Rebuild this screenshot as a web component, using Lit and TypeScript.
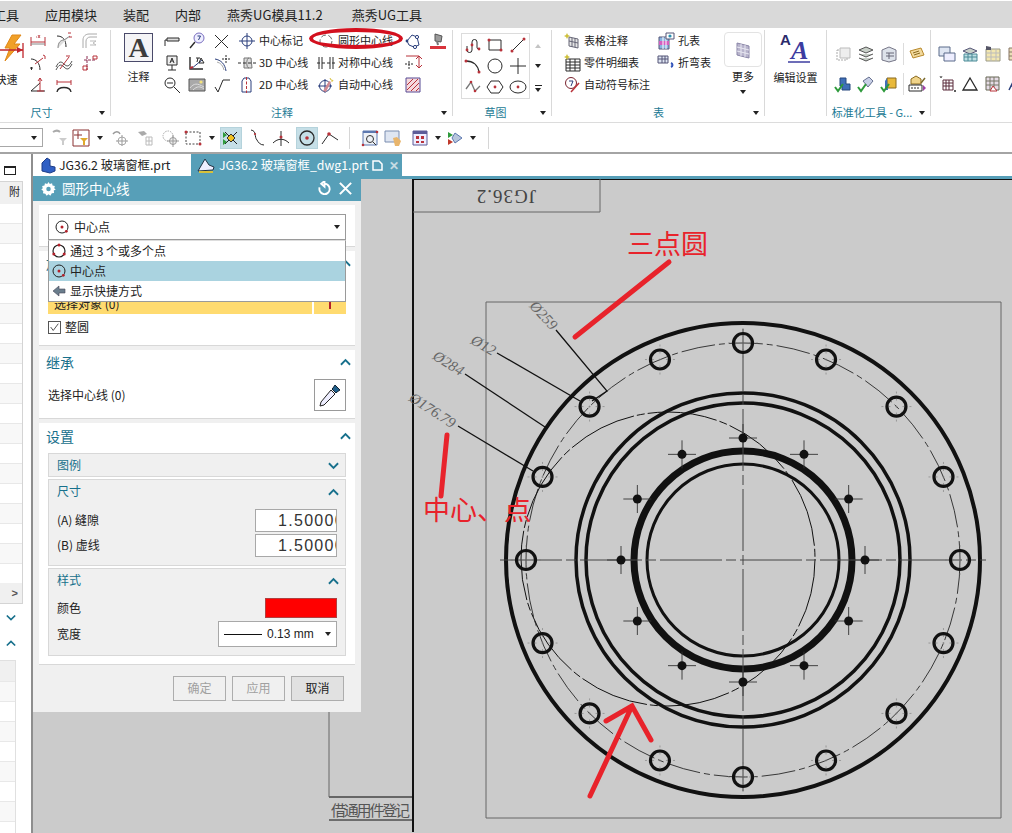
import { LitElement, html, svg, css, TemplateResult } from 'lit';
import { customElement } from 'lit/decorators.js';

const RED = '#b8323a';
const DK = '#2a2a2a';
const NAVY = '#2b3f7c';

// 18x18 ribbon and toolbar icons
const ICONS: Record<string, TemplateResult> = {
  dimH: svg`<path d="M2 5v9M16 5v9M2 10h14" stroke="${RED}" fill="none"/><path d="M7 5h1M9 3l2 3M11 3l-2 3" stroke="${RED}" fill="none" stroke-width=".8"/><path d="M2 12h14" stroke="#888"/>`,
  dimR: svg`<path d="M2 4c6 0 9 4 9 11" stroke="${DK}" fill="none"/><path d="M3 16c0-6 3-8 6-8l6-4" stroke="#888" fill="#ddd"/><path d="M13 1h3M14 5h3" stroke="${RED}"/>`,
  dimGrey: svg`<path d="M2 16V8c0-4 3-6 6-6h8M5 16V9c0-2 2-4 4-4h7" stroke="#aaa" fill="none"/><path d="M9 9h6l-3 2 3 2H9" stroke="#bbb" fill="none"/>`,
  dimR2: svg`<path d="M2 5c5 0 9 4 9 11" stroke="${DK}" fill="none"/><path d="M6 10l8-6" stroke="${RED}"/><path d="M14 1l2 1v3" stroke="${RED}" fill="none"/><path d="M1 14h3M2.5 13v3" stroke="${DK}"/>`,
  dimWave: svg`<path d="M1 13c3-6 5-6 8-3s5 3 8-3M1 16c3-6 5-6 8-3s5 3 8-3" stroke="#555" fill="none"/><path d="M5 15l9-12" stroke="${RED}"/><path d="M11 2h4" stroke="${RED}"/>`,
  dimOrd: svg`<path d="M3 6h12M6 2v14" stroke="#8a2c50" fill="none" stroke-dasharray="3 1"/><path d="M12 2h4v3h-4zM2 12h4v4H2z" stroke="${RED}" fill="none"/>`,
  dimAng: svg`<path d="M2 15L11 7M2 15h14" stroke="${DK}" fill="none"/><path d="M11 2v13M9 5l2-3 2 3M8 15h7" stroke="${RED}" fill="none"/>`,
  dimArc: svg`<path d="M2 4v5M16 4v5M2 6h14" stroke="${RED}" fill="none"/><path d="M2 16c1-6 13-6 14 0" stroke="${DK}" fill="none" stroke-width="1.3"/>`,
  weld: svg`<path d="M2 14V8h4" stroke="${DK}" fill="none"/><path d="M4 6h12v3H4z" stroke="${DK}" fill="#ddd"/>`,
  balloon: svg`<circle cx="11" cy="6" r="5" stroke="#7a6fc0" fill="#eef"/><path d="M9.5 4h3l-2 4" stroke="${NAVY}" fill="none"/><path d="M7 10l-5 6" stroke="${DK}" stroke-width="1.4"/>`,
  cross: svg`<path d="M2 3l13 13M15 3L2 16" stroke="${DK}" fill="none"/>`,
  flag: svg`<path d="M4 2h10v9H4z" stroke="${DK}" fill="#eee"/><path d="M7 9l2-5 2 5M8 7h2M9 11v5M5 16h8" stroke="${DK}" fill="none"/>`,
  datum: svg`<path d="M2 3v12h13" stroke="${DK}" fill="none" stroke-width="1.4"/><path d="M3 15L14 6" stroke="${NAVY}"/><path d="M8 4h4M10 4l-1 4M13 4l3 5h-5z" stroke="${DK}" fill="none"/><path d="M2 14l3-1" stroke="${RED}" stroke-width="2"/>`,
  arcCross: svg`<path d="M2 5c6 1 10 5 11 12" stroke="${NAVY}" fill="none"/><path d="M4 8c4 1 6 4 7 8" stroke="#aaa" fill="none"/><path d="M13 1v9M9 5h8" stroke="${DK}" stroke-dasharray="2 1"/>`,
  search: svg`<circle cx="7" cy="7" r="5" stroke="${DK}" fill="none"/><path d="M4 7h6M11 11l6 6" stroke="${DK}"/>`,
  image: svg`<path d="M1 3h16v12H1z" stroke="#555" fill="#a9a9a9"/><path d="M2 12c4-5 7-5 14-1M5 14c4-4 7-4 11-1" stroke="#ddd" fill="none"/><circle cx="13" cy="6" r="1.6" fill="#f3e27a"/>`,
  rough: svg`<path d="M2 11l3 5 5-12h7" stroke="${DK}" fill="none"/>`,
  centerMark: svg`<circle cx="9" cy="9" r="5" stroke="${NAVY}" fill="none"/><path d="M9 1v16M1 9h16" stroke="${NAVY}"/>`,
  center3d: svg`<path d="M6 4h7l1 10H6z" stroke="#777" fill="#ddd"/><path d="M11 4c-3 0-3 10 0 10" stroke="#777" fill="none"/><path d="M0 9h18" stroke="${DK}" stroke-dasharray="3 2"/>`,
  center2d: svg`<path d="M4 5l2-3h5l2 3v11H4z" stroke="${NAVY}" fill="none"/><path d="M8.5 1v16" stroke="${RED}" stroke-dasharray="3 1.5"/>`,
  centerCircle: svg`<circle cx="9" cy="9" r="6" stroke="#666" fill="none" stroke-dasharray="5 2.5"/>`,
  symCenter: svg`<path d="M2 3v12M5 3v12M13 3v12M16 3v12" stroke="${DK}"/><path d="M0 9h18" stroke="${DK}" stroke-dasharray="3 2"/>`,
  autoCenter: svg`<circle cx="8" cy="10" r="5.5" stroke="${NAVY}" fill="none"/><path d="M1 10h14M8 3v14" stroke="${NAVY}"/><path d="M6 15l6-10 2 1-5 10z" fill="#d28a92"/><path d="M13 2l1 2 2 .5-1.5 1.5" stroke="#d7c13c" fill="none"/>`,
  bolt: svg`<path d="M3 9l5-6 5 2 2 8-5 2-5-2z" stroke="${NAVY}" fill="none"/><circle cx="3" cy="9" r="1.4" fill="${NAVY}"/><circle cx="13" cy="5" r="1.6" fill="#fff" stroke="${NAVY}"/><circle cx="11" cy="15" r="1.6" fill="#fff" stroke="${NAVY}"/>`,
  ptDim: svg`<path d="M1 10h8M5 7v9" stroke="${DK}" stroke-dasharray="2 1"/><path d="M2 2h13M15 2v11M12 5l3-3 3 3M12 11l3 3 3-3" stroke="${RED}" fill="none"/>`,
  hatch: svg`<path d="M2 2h14v14H2z" stroke="#574a94" fill="#f5d9dd"/><path d="M3 9l6-6M3 14l11-11M7 15l8-8M12 15l3-3" stroke="${RED}"/>`,
  paint: svg`<path d="M6 2l7 2-1 6-6-1z" fill="#9b9b9b" stroke="#555"/><path d="M8 9l1 4" stroke="#777" stroke-width="2"/><path d="M1 14h16v3H1z" fill="#d8333b"/>`,
  skSpline: svg`<path d="M3 10v4a2.5 2.5 0 0 0 5 0V6a2.5 2.5 0 0 1 5 0v5a2 2 0 0 0 3 2" stroke="${DK}" fill="none"/><g fill="${RED}"><circle cx="3" cy="14" r="1.4"/><circle cx="8" cy="9" r="1.4"/><circle cx="15" cy="13" r="1.4"/></g>`,
  skRect: svg`<path d="M3 4h12v10H3z" stroke="${DK}" fill="none"/><g fill="${RED}"><circle cx="3" cy="4" r="1.5"/><circle cx="15" cy="14" r="1.5"/></g>`,
  skLine: svg`<path d="M3 15L15 3" stroke="${DK}"/><g fill="${RED}"><circle cx="3" cy="15" r="1.5"/><circle cx="15" cy="3" r="1.5"/></g>`,
  skArc: svg`<path d="M2 4c7 0 12 4 13 11" stroke="${DK}" fill="none" stroke-width="1.3"/><g fill="${RED}"><circle cx="2" cy="4" r="1.5"/><circle cx="15" cy="15" r="1.5"/></g>`,
  skCircle: svg`<circle cx="9" cy="9" r="7" stroke="${DK}" fill="none"/>`,
  skPlus: svg`<path d="M9 1v16M1 9h16" stroke="${DK}"/>`,
  skStudio: svg`<path d="M2 11l5-7 4 9 5-5" stroke="#777" fill="none" stroke-width="1.3"/><g fill="${RED}"><circle cx="7" cy="4" r="1.3"/><circle cx="11" cy="13" r="1.3"/></g>`,
  skHex: svg`<path d="M5 3h8l4 6-4 6H5L1 9z" stroke="${DK}" fill="none"/><circle cx="9" cy="9" r="1.4" fill="${RED}"/>`,
  skEll: svg`<ellipse cx="9" cy="9" rx="8" ry="6" stroke="${DK}" fill="none"/><circle cx="9" cy="9" r="1.4" fill="${RED}"/>`,
  tblNote: svg`<path d="M6 5l9 2v9l-9-2z" stroke="#667" fill="#e6e6e6"/><path d="M6 9l9 2M9 6v9M12 6v9" stroke="#667"/><path d="M4 1l1 2 2 1-2 1-1 2-1-2-2-1 2-1z" fill="#cfc13c"/>`,
  partList: svg`<path d="M3 5h14v12H3z" stroke="${DK}" fill="#fff"/><path d="M3 8h14M3 11h14M3 14h14M7 5v12M12 5v12" stroke="${DK}"/><path d="M4 0l1 2 2 1-2 1-1 2-1-2-2-1 2-1z" fill="#cfc13c"/>`,
  autoBalloon: svg`<circle cx="8" cy="7" r="5.5" stroke="#7a2430" fill="#fff"/><path d="M6 5h4l-2 5" stroke="${NAVY}" fill="none"/><path d="M8 16l8-9" stroke="${RED}" stroke-width="1.5"/>`,
  holeTbl: svg`<path d="M2 5h10v12H2z" fill="#8ab4e0" stroke="#557"/><path d="M2 9h10v4H2z" fill="#d45fc0"/><path d="M6 5v12M9 5v12" stroke="#fff"/><path d="M9 1h8v6H9z" fill="#fff" stroke="#557"/><circle cx="13" cy="4" r="1.6" fill="#2a8fb0"/>`,
  bendTbl: svg`<path d="M1 2h10v7H1z" fill="#dfe6f3" stroke="#557"/><path d="M1 5h10M5 2v7M8 2v7" stroke="#557"/><path d="M14 9c2 1 2 3 0 4" stroke="#3355bb" stroke-width="2" fill="none"/>`,
  moreTbl: svg`<path d="M3 2l12 3v12L3 14z" fill="#b8b4cc" stroke="#8a86a8"/><path d="M3 6l12 3M3 10l12 3M7 3v12M11 4v12" stroke="#e8e8f2"/>`,
  g1: svg`<path d="M3 5h10v10H3z" stroke="#aaa" fill="none" stroke-dasharray="2 1"/><path d="M6 3h10v10H6z" stroke="#bbb" fill="#eee"/>`,
  g2: svg`<path d="M2 5l7-3 7 3-7 3zM2 9l7 3 7-3M2 13l7 3 7-3" stroke="#555" fill="#c8d0c8"/>`,
  g3: svg`<path d="M2 5l7-3 7 3v10l-7 2-7-2z" stroke="#778" fill="#dde2ea"/><path d="M6 8h8M6 11h8M9 8v6" stroke="#667"/>`,
  g4: svg`<path d="M2 6l11-3 3 7-11 3z" stroke="#b8892c" fill="#f2d99c"/><path d="M5 8l6-2M6 10l6-2" stroke="#8a6a20"/>`,
  ok1: svg`<path d="M6 3h6v6h4v6H8v-4H6z" fill="#3f6fb8" stroke="#27497f"/><path d="M1 12l3 4 5-7" stroke="#2e9a3c" fill="none" stroke-width="2"/>`,
  ok2: svg`<path d="M6 6l6-4 4 4-5 6z" fill="#c8cfe6" stroke="#66708f"/><path d="M1 12l3 4 5-7" stroke="#2e9a3c" fill="none" stroke-width="2"/>`,
  ok3: svg`<path d="M7 3h9v10H7z" fill="#e9b93a" stroke="#8a6a20"/><path d="M7 3l-2 3v9h3" fill="#3f6fb8"/><path d="M1 12l3 4 5-7" stroke="#2e9a3c" fill="none" stroke-width="2"/>`,
  g8: svg`<path d="M3 4l5-3 5 3v5H3z" fill="#f0d48a" stroke="#8a6a20"/><path d="M1 10h13v6H1z" fill="#fff" stroke="${DK}"/><path d="M3 13h9" stroke="${DK}" stroke-dasharray="2 1"/><path d="M15 10l3 3-3 3z" fill="#a040a8"/><path d="M13 8l4-5" stroke="#7a6a2c" stroke-width="1.5"/>`,
  h1: svg`<path d="M1 2h11v9H1z" fill="#dfe6f3" stroke="#5a6a8a"/><path d="M6 8h11v8H6z" fill="#eef" stroke="#5a6a8a"/>`,
  h2: svg`<path d="M2 6l7-3 7 3-7 3z" stroke="#557" fill="#c8d0c8"/><path d="M3 9h13v7H3z" fill="#bfe0e4" stroke="#4a8a96"/><path d="M7 9v7M11 9v7M3 12h13" stroke="#4a8a96"/>`,
  h3: svg`<path d="M2 4h14v12H2z" fill="#f3e7b0" stroke="#998"/><path d="M2 8h14M2 12h14M7 4v12M12 4v12" stroke="#bbb"/><path d="M2 1l5 1v3H2z" fill="#556"/>`,
  h4: svg`<path d="M2 3h12v12H2z" fill="#eadfb8" stroke="#876"/><path d="M2 7h12M2 11h12M7 3v12" stroke="#876"/><path d="M10 14l6-6" stroke="#a5352c" stroke-width="1.5"/>`,
  h5: svg`<path d="M5 5h10v10H5z" fill="#fff" stroke="#5a2a3a"/><path d="M5 8h10M5 11h10M8 5v10M11 5v10" stroke="#5a2a3a"/><path d="M2 1l1 2 1-2M16 15l2 2M18 15l-2 2" stroke="#333" fill="none" stroke-width=".8"/>`,
  h6: svg`<path d="M9 3l7 12H2z" stroke="${DK}" fill="none" stroke-width="1.3"/>`,
  h7: svg`<path d="M2 2h13v13H2z" fill="#e6dce6" stroke="#665"/><path d="M2 6h13M2 10h13M6 2v13M10 2v13" stroke="#776"/><path d="M9 11l4 5H6z" fill="#fff" stroke="${RED}"/>`,
  h8: svg`<path d="M2 15L8 3l4 12M4 11h7" stroke="${NAVY}" fill="none" stroke-width="1.5"/>`,
  filter: svg`<path d="M2 3c3-2 5-2 7 0" stroke="#aaa" fill="none" stroke-width="2"/><path d="M8 9h8l-3 3v4h-2v-4z" fill="#ccc"/>`,
  selFilter: svg`<path d="M1 1h16v16H1z" stroke="#8a3030" fill="#fff"/><path d="M6 2v8M2 6h8" stroke="#8a3030"/><path d="M8 9h8l-3 3v4h-2v-4z" fill="#e0a92c"/>`,
  undoSnap: svg`<path d="M2 5c2-3 6-3 7 0" stroke="#999" fill="none" stroke-width="1.4"/><circle cx="11" cy="12" r="4" stroke="#aaa" fill="none"/><path d="M5 12h12M11 6v11" stroke="#999"/>`,
  greyTbl: svg`<path d="M2 3l6-1 3 3-5 2z" fill="#aaa"/><path d="M10 8h6v8h-6z" stroke="#bbb" fill="none"/><path d="M10 12h6M13 8v8" stroke="#bbb"/>`,
  dotSnap: svg`<circle cx="7" cy="7" r="5" stroke="#aaa" fill="none" stroke-dasharray="1.5 1"/><circle cx="12" cy="12" r="3.5" stroke="#999" fill="#eee"/><path d="M6 12h12M12 6v12" stroke="#999"/>`,
  selBox: svg`<path d="M2 3h14v12H2z" stroke="#444" fill="none" stroke-dasharray="2 1.5"/><g fill="${RED}"><circle cx="2" cy="3" r="1.5"/><circle cx="16" cy="15" r="1.5"/></g>`,
  snapCross: svg`<path d="M3 3l4 4M15 3l-4 4M3 15l4-4M15 15l-4-4" stroke="#222"/><path d="M9 5l4 4-4 4-4-4z" fill="#f0c020" stroke="#333"/><path d="M1 3l4 3-4 3zM1 10l4 3-4 3z" fill="#2e9a3c"/>`,
  curveEnd: svg`<path d="M3 1c6 1 3 7 6 10 1 2 3 5 7 5" stroke="${DK}" fill="none"/><circle cx="7" cy="5" r="1.1" fill="${RED}"/>`,
  perp: svg`<path d="M1 14c5-5 11-5 16 0M9 2v15" stroke="${DK}" fill="none"/><circle cx="9" cy="8" r="1.5" fill="${RED}"/>`,
  arcCenter: svg`<circle cx="9" cy="9" r="7" stroke="${DK}" fill="none" stroke-width="1.3"/><circle cx="9" cy="9" r="1.8" fill="${RED}"/>`,
  arcEnd: svg`<path d="M1 15L8 5l9 6" stroke="${DK}" fill="none"/><circle cx="8" cy="5" r="1.8" fill="${RED}"/>`,
  zoomBox: svg`<path d="M2 2h14v14H2z" stroke="#5c78b0" fill="#eef2f8"/><path d="M2 2h14v2H2z" fill="#5c78b0"/><circle cx="9" cy="10" r="3.5" stroke="#333" fill="none"/><path d="M12 13l3 3" stroke="#333"/><g fill="${RED}"><circle cx="2" cy="16" r="1.3"/><circle cx="16" cy="3" r="1.3"/></g>`,
  handBox: svg`<path d="M1 2h14v11H1z" stroke="#7a8db0" fill="#dfe6f2"/><path d="M9 9l4-1 4 4-2 5h-4z" fill="#e8b56c"/>`,
  gridBox: svg`<path d="M2 2h14v14H2z" stroke="#5c5c98" fill="#eef"/><path d="M2 2h14v3H2z" fill="#5c5c98"/><path d="M5 7h3v3H5zM10 7h3v3h-3zM5 12h3v2H5zM10 12h3v2h-3z" fill="${RED}"/>`,
  arrowMix: svg`<path d="M8 4l7 5-7 5-3-5z" fill="#b8c6dc" stroke="#5c78b0"/><path d="M1 3l5 3-5 3z" fill="#2e9a3c"/><path d="M1 10l5 3-5 3z" fill="#c0392b"/>`,
};

type Item = { icon?: string; label?: string; mark?: boolean };

const ANNOT_COLS: Item[][] = [
  [{ icon: 'weld' }, { icon: 'flag' }, { icon: 'search' }],
  [{ icon: 'balloon' }, { icon: 'datum' }, { icon: 'image' }],
  [{ icon: 'cross' }, { icon: 'arcCross' }, { icon: 'rough' }],
  [{ icon: 'centerMark', label: '中心标记' }, { icon: 'center3d', label: '3D 中心线' }, { icon: 'center2d', label: '2D 中心线' }],
  [{ icon: 'centerCircle', label: '圆形中心线', mark: true }, { icon: 'symCenter', label: '对称中心线' }, { icon: 'autoCenter', label: '自动中心线' }],
  [{ icon: 'bolt' }, { icon: 'ptDim' }, { icon: 'hatch' }],
  [{ icon: 'paint' }],
];

const TOOL_ITEMS: { w: number; icon?: string; kind?: string; on?: boolean }[] = [
  { w: 22, icon: 'filter' }, { w: 20, icon: 'selFilter' }, { w: 18, kind: 'arrow' },
  { w: 22, icon: 'undoSnap' }, { w: 28, icon: 'greyTbl' }, { w: 22, icon: 'dotSnap' },
  { w: 24, icon: 'selBox' }, { w: 14, kind: 'arrow' }, { w: 24, icon: 'snapCross', on: true },
  { w: 28, icon: 'curveEnd' }, { w: 20, icon: 'perp' }, { w: 32, icon: 'arcCenter', on: true },
  { w: 14, icon: 'arcEnd' }, { w: 24, kind: 'sep' }, { w: 18, icon: 'zoomBox' },
  { w: 28, icon: 'handBox' }, { w: 26, icon: 'gridBox' }, { w: 10, kind: 'arrow' },
  { w: 26, icon: 'arrowMix' }, { w: 8, kind: 'arrow' }, { w: 22, kind: 'sep' },
];

const CX = 743;
const CY = 561;
const polar = (r: number, deg: number) => [
  CX + r * Math.cos((deg * Math.PI) / 180),
  CY + r * Math.sin((deg * Math.PI) / 180),
];
const BIG_HOLES = Array.from({ length: 16 }, (_, i) => polar(217, i * 22.5));
const SMALL_HOLES = Array.from({ length: 12 }, (_, i) => polar(122, i * 30));

const icon = (name: string) => html`<svg class="ic" viewBox="0 0 18 18">${ICONS[name]}</svg>`;
const caret = html`<span class="caret"></span>`;
const chevUp = html`<svg class="chev" viewBox="0 0 12 8"><path d="M1 7l5-5 5 5" /></svg>`;
const chevDown = html`<svg class="chev" viewBox="0 0 12 8"><path d="M1 1l5 5 5-5" /></svg>`;
const modeThree = html`<svg class="mode" viewBox="0 0 16 16">
  <circle cx="8" cy="8" r="6" fill="none" stroke="#222" stroke-width="1.2" />
  <g fill="#b3202a"><circle cx="8" cy="2" r="1.5" /><circle cx="2.8" cy="11" r="1.5" /><circle cx="13.2" cy="11" r="1.5" /></g>
</svg>`;
const modeCenter = html`<svg class="mode" viewBox="0 0 16 16">
  <circle cx="8" cy="8" r="6" fill="none" stroke="#222" />
  <circle cx="8" cy="8" r="1.5" fill="#b3202a" /><circle cx="12.3" cy="12.3" r="1.4" fill="#b3202a" />
</svg>`;

@customElement('app-root')
export class AppRoot extends LitElement {
  static override styles = css`
    :host {
      display: block;
      width: 1012px;
      height: 833px;
      overflow: hidden;
      background: #fff;
      color: #222;
      font: 11px/1.2 "Noto Sans CJK SC", "Liberation Sans", sans-serif;
    }
    .ic { width: 18px; height: 18px; flex: none; overflow: visible; stroke-width: 1; }
    .caret {
      display: inline-block;
      flex: none;
      width: 0;
      height: 0;
      border: 3.5px solid transparent;
      border-top: 4px solid #222;
      border-bottom: 0;
    }

    .menu {
      height: 27px;
      margin-top: 1px;
      background: #d9d9d9;
      display: flex;
      align-items: center;
      gap: 26px;
      font-size: 13px;
      white-space: nowrap;
    }
    .menu span:first-child { margin-left: -7px; }
    .menu span:last-child { margin-left: 3px; }

    .ribbon {
      height: 94px;
      display: flex;
      border-bottom: 1px solid #dcdcdc;
      box-sizing: content-box;
      overflow: hidden;
    }
    .group {
      flex: none;
      display: flex;
      flex-direction: column;
      position: relative;
      padding-top: 2px;
      box-sizing: border-box;
    }
    .group.sep::after {
      content: "";
      position: absolute;
      right: 0;
      top: 2px;
      bottom: 6px;
      width: 1px;
      background: #d9d9d9;
    }
    .gbody { height: 75px; display: flex; }
    .gbody.tbl { padding-left: 9px; }
    .glabel {
      flex: 1;
      position: relative;
      text-align: center;
      color: #1c7a94;
      font-size: 11px;
      line-height: 13px;
      padding-top: 1px;
      white-space: nowrap;
    }
    .glabel .caret { position: absolute; top: 6px; right: 6px; }
    .col { display: flex; flex-direction: column; flex: none; }
    .cell { height: 22px; display: flex; align-items: center; gap: 1px; position: relative; white-space: nowrap; }
    .cell .slot { width: 22px; display: flex; justify-content: center; flex: none; }
    .oval {
      position: absolute;
      left: -6px;
      top: -2px;
      width: 94px;
      height: 21px;
      border: 4px solid #d3101e;
      border-radius: 50%;
      box-sizing: border-box;
    }
    .big {
      flex: none;
      display: flex;
      flex-direction: column;
      align-items: center;
      line-height: 14px;
    }
    .quick { width: 27px; overflow: hidden; padding-top: 3px; }
    .quick svg { width: 28px; height: 32px; flex: none; margin-left: -1px; }
    .quick span { margin-top: 7px; white-space: nowrap; margin-left: -14px; }
    .note { width: 29px; margin: 3px 8px 0 13px; }
    .note b {
      width: 29px;
      height: 29px;
      box-sizing: border-box;
      border: 1px solid #4a4a6a;
      background: #f4f4f6;
      font: 700 28px/27px "Liberation Serif", serif;
      text-align: center;
      color: #3c3c3c;
    }
    .note span { margin-top: 7px; white-space: nowrap; }
    .gallery {
      margin: 3px 0 0 8px;
      width: 69px;
      height: 66px;
      box-sizing: border-box;
      border: 1px solid #dcdcdc;
      display: grid;
      grid-template-columns: repeat(3, 22.3px);
      grid-auto-rows: 21.3px;
      place-items: center;
    }
    .scroll {
      width: 14px;
      margin: 3px 0 0 1px;
      display: flex;
      flex-direction: column;
      align-items: center;
    }
    .scroll i { height: 22px; display: flex; align-items: center; flex-direction: column; justify-content: center; gap: 2px; }
    .scroll i.off .caret { border-top-color: transparent; border-bottom: 4px solid #c4c4c4; }
    .scroll u { width: 7px; height: 1px; background: #222; }
    .more { margin: 2px 0 0 10px; width: 38px; }
    .more b {
      display: flex;
      align-items: center;
      justify-content: center;
      width: 38px;
      height: 35px;
      box-sizing: border-box;
      border: 1px solid #e3e3e3;
      border-radius: 4px;
    }
    .more span:not(.caret) { margin: 2px 0 7px; }
    .edit { width: 61px; padding-top: 2px; }
    .edit svg { width: 44px; height: 32px; flex: none; overflow: visible; }
    .edit span { margin-top: 6px; white-space: nowrap; }
    .tools { display: grid; grid-auto-rows: 30px; padding-top: 9px; place-items: center; }
    .tools.std { margin-left: 4px; grid-template-columns: 23px 23px 23px 6px 22px; }
    .tools.last { margin-left: 4px; grid-template-columns: repeat(4, 23px); }
    .vbar { width: 1px; height: 22px; background: #dcdcdc; }

    .toolbar {
      height: 31px;
      display: flex;
      align-items: center;
      border-bottom: 2px solid #a4a4a4;
      box-sizing: border-box;
    }
    .combo {
      width: 43px;
      height: 19px;
      margin-right: 6px;
      box-sizing: border-box;
      border: 1px solid #a8a8a8;
      border-left: 0;
      display: flex;
      align-items: center;
      justify-content: flex-end;
      padding-right: 5px;
    }
    .tool { flex: none; display: flex; justify-content: center; align-items: center; height: 24px; }
    .tool.on span {
      width: 22px;
      height: 22px;
      display: flex;
      justify-content: center;
      align-items: center;
      background: #c6dfe7;
      border: 1px solid #b5d3dc;
      box-sizing: border-box;
    }
    .tool.sep::after { content: ""; width: 1px; height: 22px; background: #d6d6d6; }

    .main { display: flex; height: 679px; }
    .side {
      width: 33px;
      flex: none;
      box-sizing: border-box;
      border-right: 2px solid #8e8e8e;
      display: flex;
      flex-direction: column;
      overflow: hidden;
    }
    .side .win { margin: 12px 0 0 4px; width: 12px; height: 9px; box-sizing: border-box; border: 1px solid #222; border-top-width: 2px; flex: none; }
    .list { margin-top: 6px; width: 23px; height: 423px; box-sizing: border-box; border: 1px solid #d4d4d4; border-left: 0; display: flex; flex-direction: column; flex: none; }
    .list .head { height: 22px; background: #f0f0f0; font-size: 11px; text-align: right; padding: 3px 2px 0 0; box-sizing: border-box; flex: none; }
    .row { height: 20px; flex: none; border-bottom: 1px solid #e8e8e8; box-sizing: border-box; }
    .row:nth-child(even) { background: #f8f8f8; }
    .rows { flex: 1; overflow: hidden; }
    .list .bar { height: 20px; background: #f0f0f0; display: flex; justify-content: flex-end; align-items: center; padding-right: 4px; font: 700 11px "Liberation Sans", sans-serif; color: #555; }
    .side .chev { margin: 10px 0 0 6px; width: 10px; height: 8px; }
    .side .chev + .chev { margin-top: 17px; }
    .sub { margin-top: 13px; width: 15px; flex: 1; border: 1px solid #e0e0e0; border-left: 0; border-bottom: 0; }
    .sub .row:first-child { height: 21px; background: #f0f0f0; }
    .chev { fill: none; stroke: #17708c; stroke-width: 2; width: 11px; height: 8px; flex: none; }

    .work { flex: 1; position: relative; display: flex; flex-direction: column; min-width: 0; }
    .tabs { height: 22px; display: flex; flex: none; font-size: 12.3px; white-space: nowrap; }
    .tab { display: flex; align-items: center; gap: 2px; padding-left: 6px; box-sizing: border-box; }
    .tab.a { width: 158px; }
    .tab.b { width: 211px; background: #579fb8; color: #fff; gap: 4px; }
    .tab.b em { font-style: normal; font-weight: 700; color: #c6dbe3; margin-left: 2px; }
    .strip { height: 3px; background: #579fb8; flex: none; }
    .canvas { flex: 1; background: #cbcbcb; min-height: 0; }
    .canvas svg { display: block; width: 979px; height: 654px; }

    .dialog {
      position: absolute;
      left: 0;
      top: 22px;
      width: 328px;
      height: 536px;
      background: #f0f0f0;
      font-size: 12px;
    }
    .dtitle {
      height: 25px;
      background: #579fb8;
      color: #fff;
      display: flex;
      align-items: center;
      padding: 0 8px;
      font-size: 13.5px;
      gap: 6px;
    }
    .dtitle span { flex: 1; }
    .dtitle svg { width: 15px; height: 15px; flex: none; }
    .dbody { padding: 4px 6px 0; display: flex; flex-direction: column; gap: 4px; }
    .sect { background: #fff; border-bottom: 1px solid #d8d8d8; box-sizing: border-box; padding: 0 9px; position: relative; }
    .s1 { height: 42px; padding-top: 9px; }
    .s2 { height: 95px; }
    .s3 { height: 69px; }
    .s4 { height: 242px; }
    .stitle {
      margin: 0 -5px 0 -2px;
      display: flex;
      justify-content: space-between;
      align-items: center;
      color: #17708c;
      font-size: 14px;
      height: 24px;
    }
    .select {
      height: 26px;
      box-sizing: border-box;
      border: 1px solid #9a9a9a;
      display: flex;
      align-items: center;
      justify-content: space-between;
      padding: 0 5px;
    }
    .select div { display: flex; align-items: center; gap: 4px; }
    .mode { width: 16px; height: 16px; flex: none; }
    .pop {
      position: absolute;
      left: 15px;
      top: 64px;
      width: 298px;
      height: 62px;
      box-sizing: border-box;
      background: #fff;
      border: 1px solid #9a9a9a;
      border-top-color: #ddd;
      z-index: 2;
    }
    .pop div { height: 20px; display: flex; align-items: center; gap: 3px; padding-left: 2px; }
    .pop .cur { background: #aad3e0; }
    .yellow { display: flex; gap: 2px; height: 20px; margin-top: 19px; }
    .yellow div { background: #ffdb70; }
    .yellow div:first-child { flex: 1; padding-left: 6px; line-height: 20px; }
    .yellow div:last-child { width: 32px; display: flex; justify-content: center; align-items: center; }
    .check { display: flex; align-items: center; gap: 4px; margin-top: 6px; }
    .box {
      width: 13px;
      height: 13px;
      box-sizing: border-box;
      border: 1px solid #555;
      display: flex;
    }
    .pick { display: flex; justify-content: space-between; align-items: center; margin-top: 5px; }
    .dropper { width: 32px; height: 32px; box-sizing: border-box; border: 1px solid #9a9a9a; display: flex; }
    .s4 .stitle { height: 26px; margin-bottom: 4px; }
    .panel {
      background: #f0f0f0;
      border: 1px solid #d8d8d8;
      box-sizing: border-box;
      padding: 0 8px;
      margin-bottom: 2px;
    }
    .ph { height: 23px; display: flex; justify-content: space-between; align-items: center; color: #17708c; font-size: 12px; margin-right: -2px; }
    .p1 { height: 24px; }
    .p2 { height: 87px; }
    .p3 { height: 88px; }
    .frow { display: flex; justify-content: space-between; align-items: center; }
    .p2 .frow { height: 23px; margin-bottom: 2px; }
    .p2 .ph { margin-bottom: 6px; }
    .value {
      width: 82px;
      height: 23px;
      box-sizing: border-box;
      border: 1px solid #a8a8a8;
      background: #fff;
      overflow: hidden;
      white-space: nowrap;
      font: 16px/21px "Liberation Sans", sans-serif;
      padding-left: 22px;
      letter-spacing: 1.3px;
      color: #333;
    }
    .p3 .ph { margin-bottom: 6px; }
    .swatch { width: 72px; height: 20px; background: #ff0000; border: 1px solid #b04040; box-sizing: border-box; }
    .width {
      margin-top: 3px;
      height: 26px;
    }
    .wsel {
      width: 119px;
      height: 26px;
      box-sizing: border-box;
      border: 1px solid #a8a8a8;
      background: #fff;
      display: flex;
      align-items: center;
      gap: 5px;
      padding: 0 5px;
      font: 12px "Liberation Sans", sans-serif;
    }
    .wsel hr { width: 38px; border: 0; border-top: 1px solid #111; margin: 0; flex: none; }
    .wsel span:not(.caret) { flex: 1; white-space: nowrap; }
    .dfoot { display: flex; justify-content: flex-end; gap: 6px; padding: 11px 17px 0 0; }
    .btn {
      width: 53px;
      height: 25px;
      box-sizing: border-box;
      border: 1px solid #adadad;
      display: flex;
      align-items: center;
      justify-content: center;
      color: #a0a0a0;
    }
    .btn.go { background: #e1e1e1; color: #222; }
  `;

  private renderCol(items: Item[], width: number) {
    return html`<div class="col" style="width:${width}px">
      ${items.map(
        (it) => html`<div class="cell">
          <span class="slot">${it.icon ? icon(it.icon) : ''}</span>
          ${it.label ? html`<span>${it.label}</span>` : ''}
          ${it.mark ? html`<span class="oval"></span>` : ''}
        </div>`,
      )}
    </div>`;
  }

  private renderRibbon() {
    const annotWidths = [25, 25, 25, 79, 87, 25, 22];
    const sketch = ['skSpline', 'skRect', 'skLine', 'skArc', 'skCircle', 'skPlus', 'skStudio', 'skHex', 'skEll'];
    const std = ['g1', 'g2', 'g3', '|', 'g4', 'ok1', 'ok2', 'ok3', '|', 'g8'];
    const last = ['h1', 'h2', 'h3', 'h4', 'h5', 'h6', 'h7', 'h8'];
    return html`<div class="ribbon">
      <div class="group sep" style="width:111px">
        <div class="gbody">
          <div class="big quick">
            <svg viewBox="0 0 28 32">
              <path d="M13 2h9l-7 9h6L6 28l5-13H6z" fill="#f0a028" stroke="#e08818" />
              <path d="M0 17h24M24 10v15" stroke="#c0272d" stroke-width="1.3" fill="none" />
              <path d="M24 17l-6-3v6z" fill="#c0272d" />
            </svg>
            <span>快速</span>
          </div>
          ${this.renderCol([{ icon: 'dimH' }, { icon: 'dimR2' }, { icon: 'dimAng' }], 26)}
          ${this.renderCol([{ icon: 'dimR' }, { icon: 'dimWave' }, { icon: 'dimArc' }], 26)}
          ${this.renderCol([{ icon: 'dimGrey' }, { icon: 'dimOrd' }], 26)}
        </div>
        <div class="glabel"><span style="margin-right:28px">尺寸</span>${caret}</div>
      </div>

      <div class="group sep" style="width:342px">
        <div class="gbody">
          <div class="big note"><b>A</b><span>注释</span></div>
          ${ANNOT_COLS.map((c, i) => this.renderCol(c, annotWidths[i]))}
        </div>
        <div class="glabel">注释${caret}</div>
      </div>

      <div class="group sep" style="width:99px">
        <div class="gbody">
          <div class="gallery">${sketch.map((n) => icon(n))}</div>
          <div class="scroll">
            <i class="off">${caret}</i><i>${caret}</i><i><u></u>${caret}</i>
          </div>
        </div>
        <div class="glabel"><span style="margin-right:14px">草图</span>${caret}</div>
      </div>

      <div class="group sep" style="width:213px">
        <div class="gbody tbl">
          ${this.renderCol(
            [
              { icon: 'tblNote', label: '表格注释' },
              { icon: 'partList', label: '零件明细表' },
              { icon: 'autoBalloon', label: '自动符号标注' },
            ],
            94,
          )}
          ${this.renderCol([{ icon: 'holeTbl', label: '孔表' }, { icon: 'bendTbl', label: '折弯表' }], 59)}
          <div class="big more"><b>${icon('moreTbl')}</b><span>更多</span>${caret}</div>
        </div>
        <div class="glabel">表${caret}</div>
      </div>

      <div class="group sep" style="width:62px">
        <div class="gbody">
          <div class="big edit">
            <svg viewBox="0 0 44 32">
              <text x="6" y="13" font-family="Liberation Sans" font-weight="700" font-size="15" fill="#2b2b6b">A</text>
              <text x="17" y="27" font-family="Liberation Serif" font-weight="700" font-style="italic" font-size="26" fill="#3c3ca0">A</text>
              <path d="M14 30h22" stroke="#3c3ca0" stroke-width="1.5" />
            </svg>
            <span>编辑设置</span>
          </div>
        </div>
      </div>

      <div class="group sep" style="width:104px">
        <div class="gbody">
          <div class="tools std">
            ${std.map((n) => (n === '|' ? html`<span class="vbar"></span>` : icon(n)))}
          </div>
        </div>
        <div class="glabel"><span style="margin-right:14px">标准化工具 - G...</span>${caret}</div>
      </div>

      <div class="group" style="width:82px">
        <div class="gbody">
          <div class="tools last">${last.map((n) => icon(n))}</div>
        </div>
      </div>
    </div>`;
  }

  private renderToolbar() {
    return html`<div class="toolbar">
      <div class="combo">${caret}</div>
      ${TOOL_ITEMS.map((t) => {
        const cls = `tool ${t.on ? 'on' : ''} ${t.kind === 'sep' ? 'sep' : ''}`;
        const inner = t.kind === 'arrow' ? caret : t.icon ? icon(t.icon) : '';
        return html`<div class="${cls}" style="width:${t.w}px">${t.on ? html`<span>${inner}</span>` : inner}</div>`;
      })}
    </div>`;
  }

  private renderSide() {
    return html`<div class="side">
      <div class="win"></div>
      <div class="list">
        <div class="head">附</div>
        <div class="rows">${Array.from({ length: 19 }, () => html`<div class="row"></div>`)}</div>
        <div class="bar">&gt;</div>
      </div>
      ${chevDown}${chevUp}
      <div class="sub">${Array.from({ length: 9 }, () => html`<div class="row"></div>`)}</div>
    </div>`;
  }

  private renderDrawing() {
    const red = '#e8232b';
    return html`<svg viewBox="33 180 979 654">
      <path d="M413 180V833M413 180H1012" stroke="#111" stroke-width="2" fill="none" />
      <path d="M413 213H600V180M486 303H1001V819H486Z" stroke="#666" fill="none" />
      <text transform="rotate(180 506 197)" x="506" y="203" text-anchor="middle" font-family="Liberation Serif" font-size="19" fill="#444" letter-spacing="1">JG36.2</text>
      <path d="M329 713V798" stroke="#666" fill="none" />
      <path d="M329 798H412" stroke="#666" stroke-width="2" fill="none" />
      <path d="M329 821H412" stroke="#111" fill="none" />
      <text x="331" y="817" font-family="Liberation Serif, Noto Sans CJK SC, serif" font-size="15" fill="#555" textLength="79">借通用件登记</text>

      <g fill="none" stroke="#111">
        <circle cx="${CX}" cy="${CY}" r="237" stroke-width="4" />
        <circle cx="${CX}" cy="${CY}" r="167" stroke-width="3.5" />
        <circle cx="${CX}" cy="${CY}" r="157" stroke-width="3.5" />
        <circle cx="${CX}" cy="${CY}" r="109" stroke-width="7" />
        <circle cx="${CX}" cy="${CY}" r="96" stroke-width="3" />
        <circle cx="${CX}" cy="${CY}" r="217" stroke-width=".8" stroke-dasharray="34 4 6 4" />
        <circle cx="668" cy="560" r="147" stroke-width="1" stroke-dasharray="70 3 8 3" />
        <path d="M${CX} 330V792M500 ${CY}H986" stroke="#444" stroke-width="1" stroke-dasharray="62 4 10 4" />
      </g>
      ${BIG_HOLES.map(
        ([x, y]) => svg`
          <path d="M${x - 15} ${y}H${x + 15}M${x} ${y - 15}V${y + 15}" stroke="#777" stroke-width=".6" stroke-dasharray="2 5" />
          <circle cx="${x}" cy="${y}" r="9.5" fill="none" stroke="#111" stroke-width="3.2" />`,
      )}
      ${SMALL_HOLES.map(
        ([x, y]) => svg`
          <path d="M${x - 14} ${y}H${x + 14}M${x} ${y - 14}V${y + 14}" stroke="#333" stroke-width=".9" />
          <circle cx="${x}" cy="${y}" r="4.5" fill="#111" />`,
      )}

      <g stroke="#111" stroke-width="1.3" fill="none">
        <path d="M556 331L607 392L592 402" />
        <path d="M497 354L580 402" />
        <path d="M465 375L545 428" />
        <path d="M458 427L533 472" />
      </g>
      <g font-family="Liberation Serif, serif" font-size="15" font-style="italic" fill="#666" text-anchor="middle">
        <text transform="rotate(47 543 317)" x="543" y="321">Ø259</text>
        <text transform="rotate(30 483 347)" x="483" y="351">Ø12</text>
        <text transform="rotate(32 448 365)" x="448" y="369">Ø284</text>
        <text transform="rotate(33 432 412)" x="432" y="416">Ø176.79</text>
      </g>

      <g fill="${red}" font-family="Noto Sans CJK SC, sans-serif" font-size="27">
        <text x="627" y="255">三点圆</text>
        <text x="423" y="521">中心、点</text>
      </g>
      <g stroke="${red}" stroke-width="5" stroke-linecap="round" fill="none">
        <path d="M575 338L669 263" />
        <path d="M447 436L441 497" />
        <path d="M590 797L632 707M606 722L632 707L651 741" />
      </g>
    </svg>`;
  }

  private renderDialog() {
    return html`<div class="dialog">
      <div class="dtitle">
        <svg viewBox="0 0 16 16">
          <path d="M8 1l1.4 2.1 2.4-.7.5 2.5 2.5.5-.7 2.4L15.7 9l-2.1 1.2.4 2.5-2.5.4L10 15.6l-2-1.5-2 1.5-1.4-2.1-2.5-.4.4-2.5L.3 9l1.6-1.2-.7-2.4 2.5-.5.5-2.5 2.4.7z" fill="#fff" />
          <circle cx="8" cy="8.4" r="2.4" fill="#579fb8" />
        </svg>
        <span>圆形中心线</span>
        <svg viewBox="0 0 16 16"><path d="M8 3a5.5 5.5 0 1 1-5.2 3.8M8 0v6l-3.5-3z" fill="none" stroke="#fff" stroke-width="2" /></svg>
        <svg viewBox="0 0 16 16"><path d="M2 2l12 12M14 2L2 14" stroke="#fff" stroke-width="2.2" /></svg>
      </div>
      <div class="dbody">
        <div class="sect s1">
          <div class="select"><div>${modeCenter}<span>中心点</span></div>${caret}</div>
        </div>
        <div class="sect s2">
          <div class="stitle"><span>放置</span>${chevUp}</div>
          <div class="yellow">
            <div>选择对象 (0)</div>
            <div><svg width="10" height="12" viewBox="0 0 10 12"><path d="M1 2h8M5 2v9" stroke="#b3202a" stroke-width="2" /></svg></div>
          </div>
          <div class="check">
            <span class="box"><svg viewBox="0 0 13 13"><path d="M2 6l3 4 6-8" fill="none" stroke="#333" /></svg></span>
            <span>整圆</span>
          </div>
        </div>
        <div class="sect s3">
          <div class="stitle"><span>继承</span>${chevUp}</div>
          <div class="pick">
            <span>选择中心线 (0)</span>
            <span class="dropper">
              <svg viewBox="0 0 30 30">
                <path d="M20 5l5 5-3 2-1 1-4-4 1-1z" fill="#1f5f8a" stroke="#123" />
                <path d="M16 10l4 4-11 11-4 1 1-4z" fill="#eef" stroke="#222" />
              </svg>
            </span>
          </div>
        </div>
        <div class="sect s4">
          <div class="stitle"><span>设置</span>${chevUp}</div>
          <div class="panel p1"><div class="ph"><span>图例</span>${chevDown}</div></div>
          <div class="panel p2">
            <div class="ph"><span>尺寸</span>${chevUp}</div>
            <div class="frow"><span>(A) 缝隙</span><span class="value">1.50000</span></div>
            <div class="frow"><span>(B) 虚线</span><span class="value">1.50000</span></div>
          </div>
          <div class="panel p3">
            <div class="ph"><span>样式</span>${chevUp}</div>
            <div class="frow"><span>颜色</span><span class="swatch"></span></div>
            <div class="frow width">
              <span>宽度</span>
              <div class="wsel"><hr /><span>0.13 mm</span>${caret}</div>
            </div>
          </div>
        </div>
      </div>
      <div class="dfoot">
        <div class="btn">确定</div>
        <div class="btn">应用</div>
        <div class="btn go">取消</div>
      </div>
      <div class="pop">
        <div>${modeThree}<span>通过 3 个或多个点</span></div>
        <div class="cur">${modeCenter}<span>中心点</span></div>
        <div>
          <svg class="mode" viewBox="0 0 16 16"><path d="M2 8l6-5v3h6v4H8v3z" fill="#6a7d8c" stroke="#445" stroke-width=".6" /></svg>
          <span>显示快捷方式</span>
        </div>
      </div>
    </div>`;
  }

  protected override render() {
    return html`
      <div class="menu">
        <span>工具</span><span>应用模块</span><span>装配</span><span>内部</span>
        <span>燕秀UG模具11.2</span><span>燕秀UG工具</span>
      </div>
      ${this.renderRibbon()} ${this.renderToolbar()}
      <div class="main">
        ${this.renderSide()}
        <div class="work">
          <div class="tabs">
            <div class="tab a">
              <svg class="ic" viewBox="0 0 18 18"><path d="M3 7l5-5 3 2v6l5 1v4l-5 2-8-2z" fill="#2f5fc4" stroke="#1c3c88" /></svg>
              <span>JG36.2 玻璃窗框.prt</span>
            </div>
            <div class="tab b">
              <svg class="ic" viewBox="0 0 18 18"><path d="M1 15L8 3l4 6 5 2-1 3z" fill="#eef" stroke="#234" /><path d="M2 16h14" stroke="#d7c13c" stroke-width="2" /></svg>
              <span>JG36.2 玻璃窗框_dwg1.prt</span>
              <svg width="11" height="11" viewBox="0 0 11 11"><path d="M1 1h6l3 3v6H1z" fill="none" stroke="#fff" stroke-width="1.5" /></svg>
              <em>✕</em>
            </div>
          </div>
          <div class="strip"></div>
          <div class="canvas">${this.renderDrawing()}</div>
          ${this.renderDialog()}
        </div>
      </div>
    `;
  }
}

declare global {
  interface HTMLElementTagNameMap {
    'app-root': AppRoot;
  }
}
